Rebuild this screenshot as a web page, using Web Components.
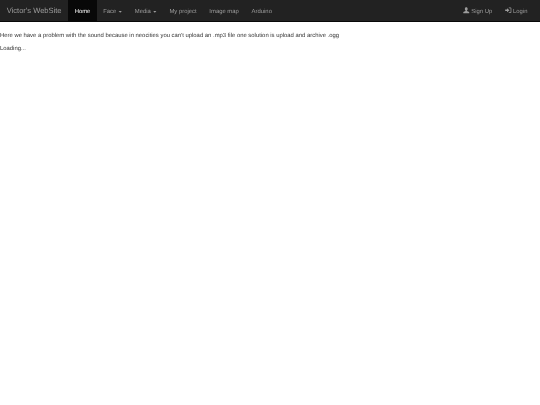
<!DOCTYPE html>
<html lang="en">
<head>
<meta charset="utf-8">
<title>Victor's WebSite</title>
<style>
  html, body { margin: 0; padding: 0; background: #fff; }
  body { font: 5.9px/8.4px "Liberation Sans", Arial, sans-serif; color: #333; text-rendering: geometricPrecision; }
</style>
</head>
<body>
<site-navbar>
  <nav-brand slot="brand">Victor's WebSite</nav-brand>
  <nav-link active>Home</nav-link>
  <nav-link caret>Face</nav-link>
  <nav-link caret>Media</nav-link>
  <nav-link>My project</nav-link>
  <nav-link>Image map</nav-link>
  <nav-link>Arduino</nav-link>
  <nav-link slot="right" icon="user">Sign Up</nav-link>
  <nav-link slot="right" icon="login">Login</nav-link>
</site-navbar>
<page-text>Here we have a problem with the sound because in neocities you can't upload an .mp3 file one solution is upload and archive .ogg</page-text>
<page-text>Loading...</page-text>
<script>
const icons = {
  user: '<svg viewBox="0 0 12 12" width="6.500" height="6.500"><path fill="currentColor" d="M6 .5c1.600 0 2.600 1.200 2.600 3 0 1.300-.6 2.500-1.400 3.100v.9l3.300 1.300c.7.300 1 .8 1 1.400v1.300H.5v-1.300c0-.6.300-1.100 1-1.400l3.300-1.300v-.9C4 6 3.400 4.800 3.400 3.500c0-1.800 1-3 2.600-3z"/></svg>',
  login: '<svg viewBox="0 0 12 12" width="6.500" height="6.500"><path fill="currentColor" d="M7 1h3.200c.9 0 1.500.6 1.500 1.500v7c0 .9-.6 1.500-1.500 1.500H7V9.700h3c.3 0 .4-.1.400-.4V2.700c0-.3-.1-.4-.4-.4H7zM.3 4.700h3.400V2.500L8.300 6 3.700 9.500V7.300H.3z"/></svg>'
};
class SiteNavbar extends HTMLElement {
  constructor() {
    super();
    this.attachShadow({ mode: 'open' }).innerHTML = `
      <style>
        :host { display: block; margin-bottom: 10px; }
        .bar { display: flex; justify-content: space-between; height: 21.5px; box-sizing: border-box;
               background: #222; border-bottom: .4px solid #080808; }
        .left, .right { display: flex; align-items: stretch; }
        .right { padding-right: 6.200px; }
      </style>
      <div class="bar">
        <div class="left"><slot name="brand"></slot><slot></slot></div>
        <div class="right"><slot name="right"></slot></div>
      </div>`;
  }
}
class NavBrand extends HTMLElement {
  constructor() {
    super();
    this.attachShadow({ mode: 'open' }).innerHTML = `
      <style>
        :host { display: flex; align-items: center; padding: 2.500px 6.700px 0; font-size: 7.56px; color: #9d9d9d; filter: blur(.3px); }
      </style><slot></slot>`;
  }
}
class NavLink extends HTMLElement {
  constructor() {
    super();
    const icon = this.getAttribute('icon');
    this.attachShadow({ mode: 'open' }).innerHTML = `
      <style>
        :host { display: flex; align-items: center; gap: 2.200px; padding: 3px 6.400px 0; color: #9d9d9d; font-size: 5.9px; }
        :host([icon]) { gap: 1.500px; }
        :host([active]) { color: #fff; background: #080808; }
        svg { display: block; margin-top: -2.500px; filter: blur(.2px); }
        .t { display: block; filter: blur(.3px); }
        .caret { width: 3.600px; height: 1.800px; background: currentColor; clip-path: polygon(0 0, 100% 0, 50% 100%); }
      </style>
      ${icon ? icons[icon] : ''}<span class="t"><slot></slot></span>${this.hasAttribute('caret') ? '<span class="caret"></span>' : ''}`;
  }
}
class PageText extends HTMLElement {
  constructor() {
    super();
    this.attachShadow({ mode: 'open' }).innerHTML = `
      <style>:host { display: block; margin: 4.700px 0; filter: blur(.3px); }</style><slot></slot>`;
  }
}
customElements.define('site-navbar', SiteNavbar);
customElements.define('nav-brand', NavBrand);
customElements.define('nav-link', NavLink);
customElements.define('page-text', PageText);
</script>
</body>
</html>
